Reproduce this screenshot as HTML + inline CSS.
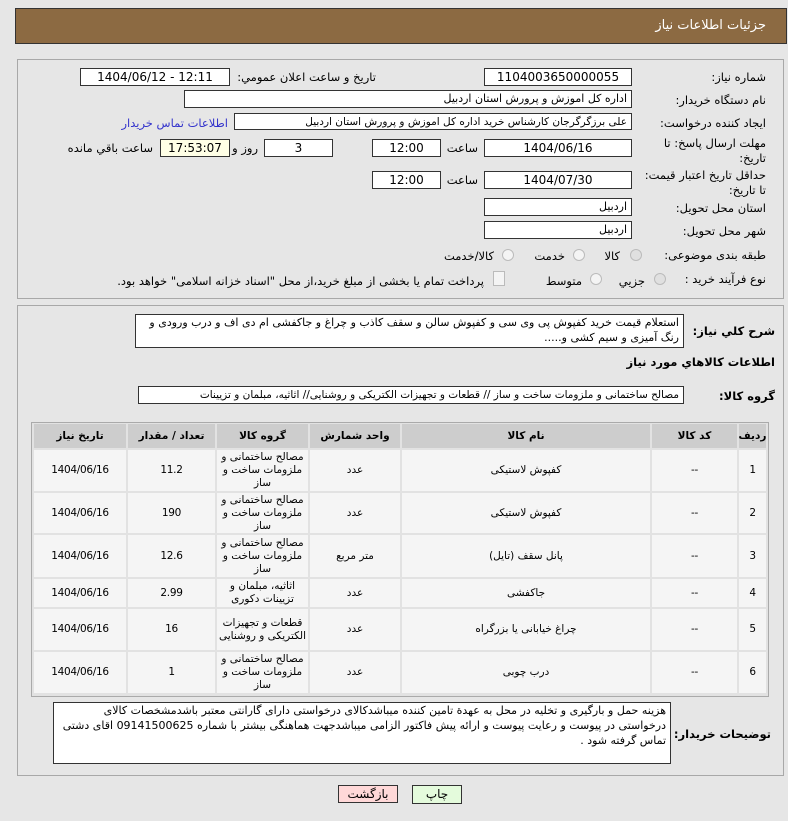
<!DOCTYPE html>
<html><head><meta charset="utf-8"><style>
body{margin:0;width:788px;height:821px;background:#e6e6e6;font-family:"DejaVu Sans","Liberation Sans",sans-serif;font-size:11px;color:#000;position:relative;overflow:hidden}
.a{position:absolute}
.hdr{left:15px;top:8px;width:770px;height:34px;background:#8c6a42;border:1px solid #333}
.hdr span{position:absolute;right:20px;top:9px;color:#fff;font-size:13px}
.pan{border:1px solid #a8a8a8;background:#e6e6e6}
.box{position:absolute;background:#fff;border:1px solid #333;box-sizing:border-box;text-align:center;line-height:16px;font-size:12px;white-space:nowrap;overflow:hidden}
.r{text-align:right;direction:rtl;padding-right:4px;font-size:11px;letter-spacing:-0.2px}
.lb{position:absolute;direction:rtl;text-align:right;white-space:nowrap;font-size:11.5px;letter-spacing:-0.2px}
.rad{position:absolute;width:12px;height:12px;border-radius:50%;border:1px solid #bbb;background:#f4f4f4;box-sizing:border-box}
.c{position:absolute;background:#f5f5f5;display:flex;align-items:center;justify-content:center;text-align:center;direction:rtl;font-size:10.5px;line-height:13px;letter-spacing:-0.3px}
.h{background:#cdcdcd;font-weight:bold}
.btn{position:absolute;border:1px solid #333;box-sizing:border-box;text-align:center;line-height:17px;font-size:12px}
.wrap{white-space:normal;line-height:15px;font-size:11px;text-align:right}
</style></head><body>
<div class="a hdr"><span>جزئیات اطلاعات نیاز</span></div>

<div class="a pan" style="left:17px;top:59px;width:765px;height:238px"></div>
<div class="a pan" style="left:17px;top:305px;width:765px;height:469px"></div>

<div class="lb" style="right:22px;top:70px">شماره نیاز:</div>
<div class="box" style="left:484px;top:68px;width:148px;height:18px">1104003650000055</div>
<div class="lb" style="right:412px;top:70px">تاریخ و ساعت اعلان عمومي:</div>
<div class="box" style="left:80px;top:68px;width:150px;height:18px">1404/06/12 - 12:11</div>

<div class="lb" style="right:22px;top:93px">نام دستگاه خريدار:</div>
<div class="box r" style="left:184px;top:90px;width:448px;height:18px">اداره کل اموزش و پرورش استان اردبیل</div>

<div class="lb" style="right:22px;top:116px">ایجاد کننده درخواست:</div>
<div class="box r" style="left:234px;top:113px;width:398px;height:17px;font-size:10.5px">علی برزگرگرجان کارشناس خرید اداره کل اموزش و پرورش استان اردبیل</div>
<div class="lb" style="right:560px;top:116px;color:#3333cc">اطلاعات تماس خريدار</div>

<div class="lb" style="right:22px;top:136px;line-height:15px">مهلت ارسال پاسخ: تا<br>تاریخ:</div>
<div class="box" style="left:484px;top:139px;width:148px;height:18px">1404/06/16</div>
<div class="lb" style="right:310px;top:141px">ساعت</div>
<div class="box" style="left:372px;top:139px;width:69px;height:18px">12:00</div>
<div class="box" style="left:264px;top:139px;width:69px;height:18px">3</div>
<div class="lb" style="right:530px;top:141px">روز و</div>
<div class="box" style="left:160px;top:139px;width:70px;height:18px;background:#ffffe6">17:53:07</div>
<div class="lb" style="right:635px;top:141px">ساعت باقي مانده</div>

<div class="lb" style="right:22px;top:168px;line-height:15px">حداقل تاریخ اعتبار قیمت:<br>تا تاریخ:</div>
<div class="box" style="left:484px;top:171px;width:148px;height:18px">1404/07/30</div>
<div class="lb" style="right:310px;top:173px">ساعت</div>
<div class="box" style="left:372px;top:171px;width:69px;height:18px">12:00</div>

<div class="lb" style="right:22px;top:201px">استان محل تحویل:</div>
<div class="box r" style="left:484px;top:198px;width:148px;height:18px">اردبیل</div>
<div class="lb" style="right:22px;top:224px">شهر محل تحویل:</div>
<div class="box r" style="left:484px;top:221px;width:148px;height:18px">اردبیل</div>

<div class="lb" style="right:22px;top:248px">طبقه بندی موضوعی:</div>
<div class="rad" style="left:630px;top:249px;background:#e0e0e0"></div>
<div class="lb" style="right:168px;top:249px">کالا</div>
<div class="rad" style="left:573px;top:249px"></div>
<div class="lb" style="right:223px;top:249px">خدمت</div>
<div class="rad" style="left:502px;top:249px"></div>
<div class="lb" style="right:294px;top:249px">کالا/خدمت</div>

<div class="lb" style="right:22px;top:272px">نوع فرآیند خرید :</div>
<div class="rad" style="left:654px;top:273px;background:#e0e0e0"></div>
<div class="lb" style="right:143px;top:274px">جزيي</div>
<div class="rad" style="left:590px;top:273px"></div>
<div class="lb" style="right:206px;top:274px">متوسط</div>
<div class="a" style="left:493px;top:271px;width:10px;height:13px;border:1px solid #bbb;background:#f4f4f4"></div>
<div class="lb" style="right:304px;top:274px">پرداخت تمام یا بخشی از مبلغ خرید،از محل "اسناد خزانه اسلامی" خواهد بود.</div>

<div class="lb" style="right:13px;top:324px;font-weight:bold">شرح کلي نياز:</div>
<div class="box r wrap" style="left:135px;top:314px;width:549px;height:34px">استعلام قیمت خرید کفپوش پی وی سی و کفپوش سالن و سقف کاذب و چراغ و جاکفشی ام دی اف و درب ورودی و رنگ آمیزی و سیم کشی و.....</div>

<div class="lb" style="right:13px;top:355px;font-weight:bold">اطلاعات کالاهاي مورد نياز</div>

<div class="lb" style="right:13px;top:389px;font-weight:bold">گروه کالا:</div>
<div class="box r" style="left:138px;top:386px;width:546px;height:18px;font-size:10.5px;letter-spacing:-0.4px">مصالح ساختمانی و ملزومات ساخت و ساز // قطعات و تجهیزات الکتریکی و روشنایی// اثاثیه، مبلمان و تزیینات</div>

<div class="a" style="left:31px;top:422px;width:736px;height:273px;border:1px solid #aaa;background:#e2e2e2"></div>
<div class="c h" style="left:739px;top:424px;width:27px;height:24px">ردیف</div>
<div class="c h" style="left:652px;top:424px;width:85px;height:24px">کد کالا</div>
<div class="c h" style="left:402px;top:424px;width:248px;height:24px">نام کالا</div>
<div class="c h" style="left:310px;top:424px;width:90px;height:24px">واحد شمارش</div>
<div class="c h" style="left:217px;top:424px;width:91px;height:24px">گروه کالا</div>
<div class="c h" style="left:128px;top:424px;width:87px;height:24px">تعداد / مقدار</div>
<div class="c h" style="left:34px;top:424px;width:92px;height:24px">تاریخ نیاز</div>

<div class="c" style="left:739px;top:450px;width:27px;height:41px">1</div>
<div class="c" style="left:652px;top:450px;width:85px;height:41px">--</div>
<div class="c" style="left:402px;top:450px;width:248px;height:41px">کفپوش لاستیکی</div>
<div class="c" style="left:310px;top:450px;width:90px;height:41px">عدد</div>
<div class="c" style="left:217px;top:450px;width:91px;height:41px">مصالح ساختمانی و ملزومات ساخت و ساز</div>
<div class="c" style="left:128px;top:450px;width:87px;height:41px">11.2</div>
<div class="c" style="left:34px;top:450px;width:92px;height:41px">1404/06/16</div>

<div class="c" style="left:739px;top:493px;width:27px;height:40px">2</div>
<div class="c" style="left:652px;top:493px;width:85px;height:40px">--</div>
<div class="c" style="left:402px;top:493px;width:248px;height:40px">کفپوش لاستیکی</div>
<div class="c" style="left:310px;top:493px;width:90px;height:40px">عدد</div>
<div class="c" style="left:217px;top:493px;width:91px;height:40px">مصالح ساختمانی و ملزومات ساخت و ساز</div>
<div class="c" style="left:128px;top:493px;width:87px;height:40px">190</div>
<div class="c" style="left:34px;top:493px;width:92px;height:40px">1404/06/16</div>

<div class="c" style="left:739px;top:535px;width:27px;height:42px">3</div>
<div class="c" style="left:652px;top:535px;width:85px;height:42px">--</div>
<div class="c" style="left:402px;top:535px;width:248px;height:42px">پانل سقف (تایل)</div>
<div class="c" style="left:310px;top:535px;width:90px;height:42px">متر مربع</div>
<div class="c" style="left:217px;top:535px;width:91px;height:42px">مصالح ساختمانی و ملزومات ساخت و ساز</div>
<div class="c" style="left:128px;top:535px;width:87px;height:42px">12.6</div>
<div class="c" style="left:34px;top:535px;width:92px;height:42px">1404/06/16</div>

<div class="c" style="left:739px;top:579px;width:27px;height:28px">4</div>
<div class="c" style="left:652px;top:579px;width:85px;height:28px">--</div>
<div class="c" style="left:402px;top:579px;width:248px;height:28px">جاکفشی</div>
<div class="c" style="left:310px;top:579px;width:90px;height:28px">عدد</div>
<div class="c" style="left:217px;top:579px;width:91px;height:28px">اثاثیه، مبلمان و تزیینات دکوری</div>
<div class="c" style="left:128px;top:579px;width:87px;height:28px">2.99</div>
<div class="c" style="left:34px;top:579px;width:92px;height:28px">1404/06/16</div>

<div class="c" style="left:739px;top:609px;width:27px;height:41px">5</div>
<div class="c" style="left:652px;top:609px;width:85px;height:41px">--</div>
<div class="c" style="left:402px;top:609px;width:248px;height:41px">چراغ خیابانی یا بزرگراه</div>
<div class="c" style="left:310px;top:609px;width:90px;height:41px">عدد</div>
<div class="c" style="left:217px;top:609px;width:91px;height:41px">قطعات و تجهیزات الکتریکی و روشنایی</div>
<div class="c" style="left:128px;top:609px;width:87px;height:41px">16</div>
<div class="c" style="left:34px;top:609px;width:92px;height:41px">1404/06/16</div>

<div class="c" style="left:739px;top:652px;width:27px;height:41px">6</div>
<div class="c" style="left:652px;top:652px;width:85px;height:41px">--</div>
<div class="c" style="left:402px;top:652px;width:248px;height:41px">درب چوبی</div>
<div class="c" style="left:310px;top:652px;width:90px;height:41px">عدد</div>
<div class="c" style="left:217px;top:652px;width:91px;height:41px">مصالح ساختمانی و ملزومات ساخت و ساز</div>
<div class="c" style="left:128px;top:652px;width:87px;height:41px">1</div>
<div class="c" style="left:34px;top:652px;width:92px;height:41px">1404/06/16</div>

<div class="lb" style="right:17px;top:727px;font-weight:bold">توضیحات خریدار:</div>
<div class="box r wrap" style="left:53px;top:702px;width:618px;height:62px">هزینه حمل و بارگیری و تخلیه در محل به عهدة تامین کننده میباشدکالای درخواستی دارای گارانتی معتبر باشدمشخصات کالای درخواستی در پیوست و رعایت پیوست و ارائه پیش فاکتور الزامی میباشدجهت هماهنگی بیشتر با شماره 09141500625 اقای دشتی تماس گرفته شود .</div>

<div class="btn" style="left:338px;top:785px;width:60px;height:18px;background:#ffd8d8">بازگشت</div>
<div class="btn" style="left:412px;top:785px;width:50px;height:19px;background:#e4fbdc">چاپ</div>
</body></html>
